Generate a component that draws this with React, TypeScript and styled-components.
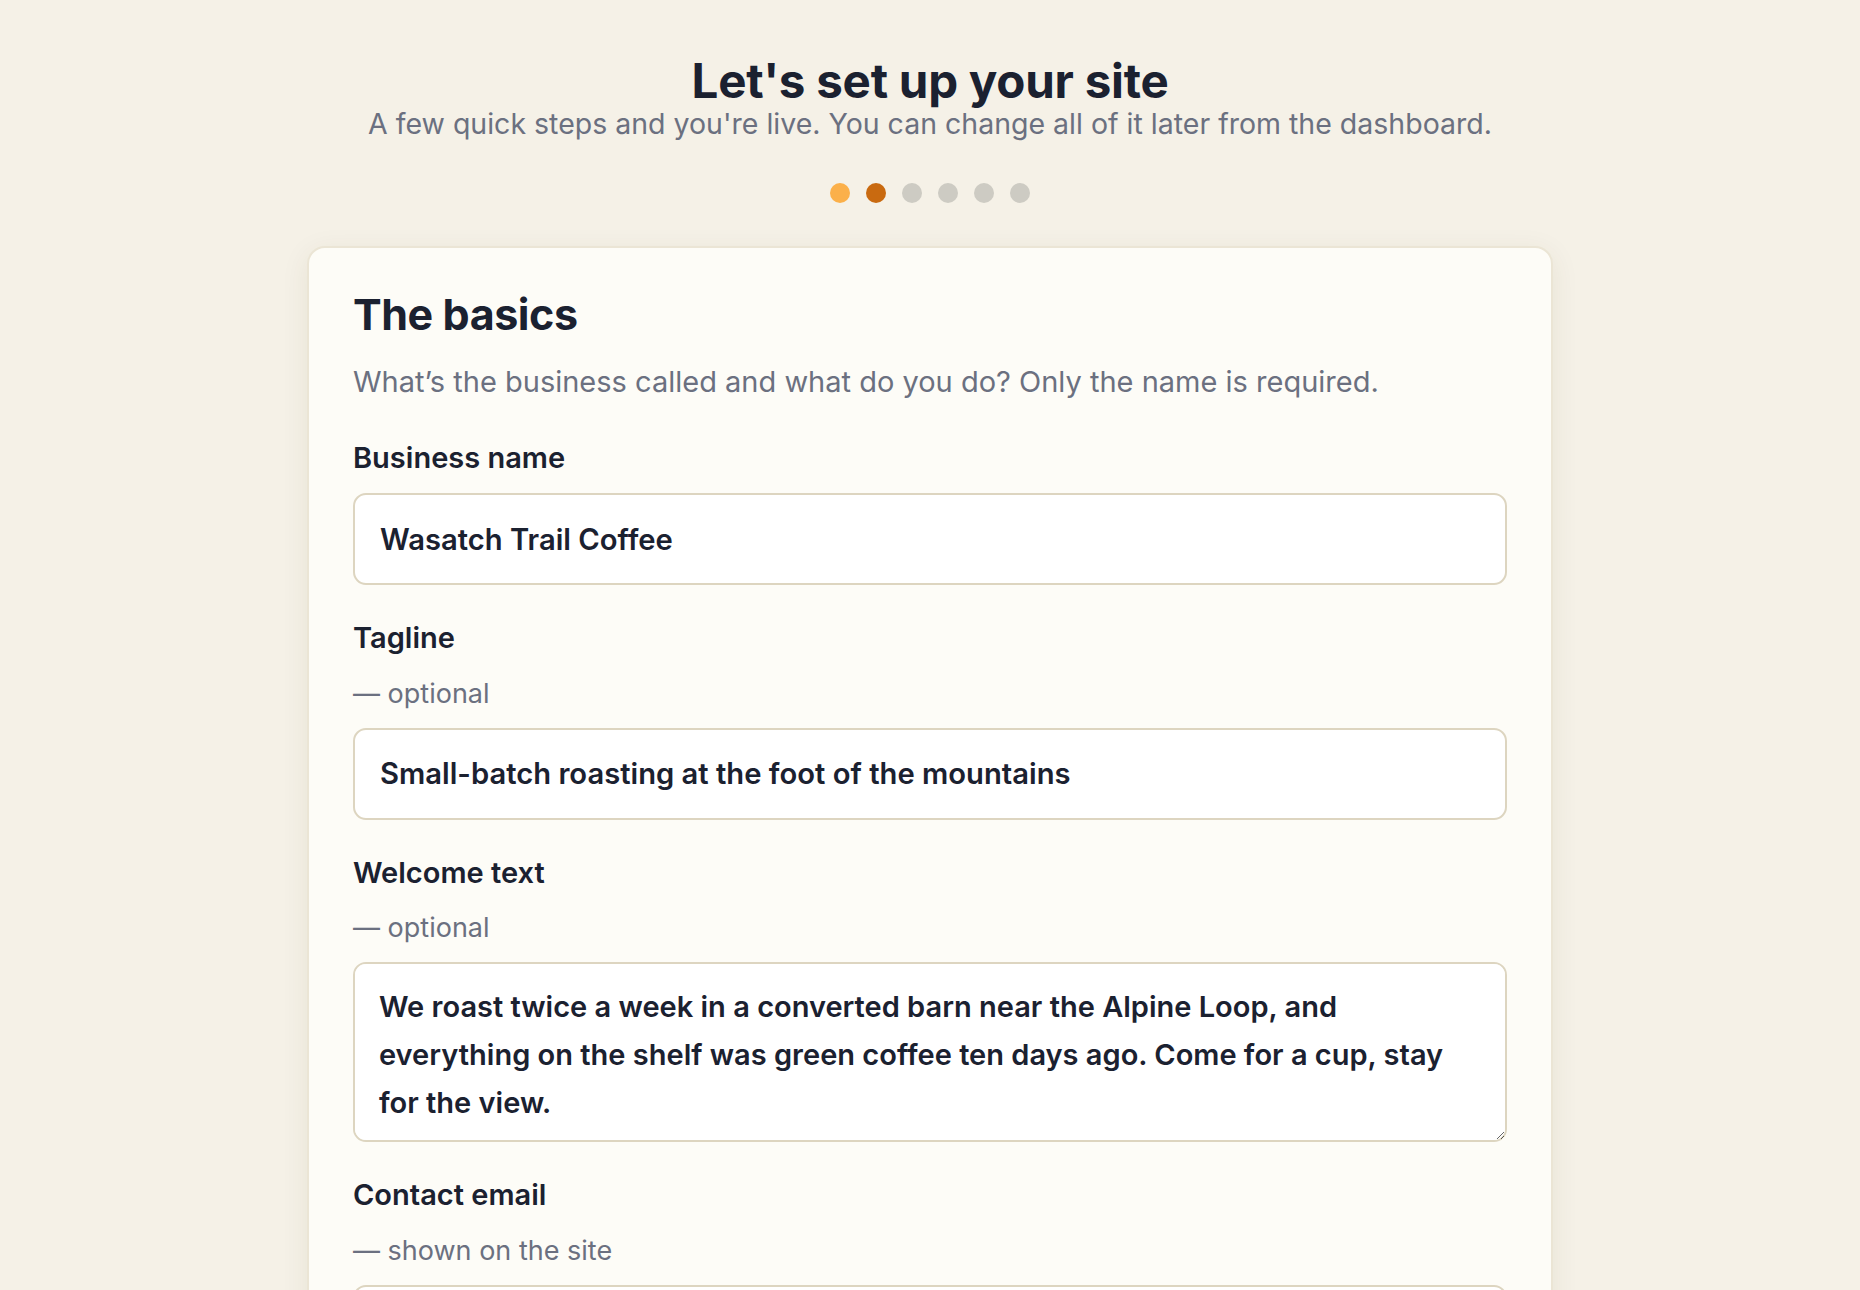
import styled, { createGlobalStyle } from "styled-components";

const GlobalStyle = createGlobalStyle`
  html, body {
    margin: 0;
    padding: 0;
    background: #f5f1e7;
  }
  body {
    font-family: Inter, "Noto Sans", sans-serif;
    color: #1b2130;
  }
  * {
    box-sizing: border-box;
  }
`;

const steps = [0, 1, 2, 3, 4, 5];
const current = 1;

export default function App() {
  return (
    <>
      <GlobalStyle />
      <PageStyle>
        <HeaderStyle>
          <TitleStyle>Let's set up your site</TitleStyle>
          <SubtitleStyle>
            A few quick steps and you're live. You can change all of it later
            from the dashboard.
          </SubtitleStyle>
        </HeaderStyle>
        <DotsStyle>
          {steps.map((s) => (
            <DotStyle
              key={s}
              $state={s < current ? "done" : s === current ? "active" : "todo"}
            />
          ))}
        </DotsStyle>
        <CardStyle>
          <CardTitleStyle>The basics</CardTitleStyle>
          <CardTextStyle>
            What’s the business called and what do you do? Only the name is
            required.
          </CardTextStyle>
          <FieldsStyle>
            <FieldStyle>
              <LabelStyle htmlFor="name">Business name</LabelStyle>
              <InputStyle id="name" defaultValue="Wasatch Trail Coffee" />
            </FieldStyle>
            <FieldStyle>
              <LabelStyle htmlFor="tagline">Tagline</LabelStyle>
              <HintStyle>— optional</HintStyle>
              <InputStyle
                id="tagline"
                defaultValue="Small-batch roasting at the foot of the mountains"
              />
            </FieldStyle>
            <FieldStyle>
              <LabelStyle htmlFor="welcome">Welcome text</LabelStyle>
              <HintStyle>— optional</HintStyle>
              <TextAreaStyle
                id="welcome"
                defaultValue="We roast twice a week in a converted barn near the Alpine Loop, and everything on the shelf was green coffee ten days ago. Come for a cup, stay for the view."
              />
            </FieldStyle>
            <FieldStyle>
              <LabelStyle htmlFor="email">Contact email</LabelStyle>
              <HintStyle>— shown on the site</HintStyle>
              <InputStyle
                id="email"
                type="email"
                defaultValue="hello@wasatchtrail.coffee"
              />
            </FieldStyle>
          </FieldsStyle>
        </CardStyle>
      </PageStyle>
    </>
  );
}

const PageStyle = styled.div`
  display: flex;
  flex-direction: column;
  align-items: center;
  padding: 55px 0 60px;
`;

const HeaderStyle = styled.div`
  display: flex;
  flex-direction: column;
  align-items: center;
  text-align: center;
`;

const TitleStyle = styled.h1`
  margin: 0;
  font-size: 47.5px;
  line-height: 1.1;
  font-weight: 700;
  letter-spacing: -0.005em;
  color: #1b2130;
`;

const SubtitleStyle = styled.p`
  margin: -1px 0 0;
  font-size: 28.5px;
  line-height: 1.25;
  font-weight: 400;
  color: #6b7080;
`;

const DotsStyle = styled.div`
  display: flex;
  gap: 16px;
  margin-top: 41px;
`;

const dotColors = {
  done: "#fbb04a",
  active: "#c96a10",
  todo: "#cdcbc3",
};

const DotStyle = styled.span<{ $state: "done" | "active" | "todo" }>`
  width: 20px;
  height: 20px;
  border-radius: 50%;
  background: ${(p) => dotColors[p.$state]};
`;

const CardStyle = styled.div`
  width: 1246px;
  margin-top: 43px;
  padding: 42px 44px 60px;
  background: #fdfcf7;
  border: 2px solid #ebe5d5;
  border-radius: 18px;
  box-shadow: 0 6px 28px rgba(80, 64, 20, 0.08);
`;

const CardTitleStyle = styled.h2`
  margin: 0;
  font-size: 43px;
  line-height: 1.15;
  font-weight: 700;
  letter-spacing: -0.01em;
  color: #1b2130;
`;

const CardTextStyle = styled.p`
  margin: 21px 0 0;
  font-size: 29px;
  line-height: 1.5;
  color: #6b7080;
`;

const FieldsStyle = styled.div`
  display: flex;
  flex-direction: column;
  gap: 33px;
  margin-top: 34px;
`;

const FieldStyle = styled.div`
  display: flex;
  flex-direction: column;
  gap: 15px;
`;

const LabelStyle = styled.label`
  font-size: 29px;
  line-height: 1.4;
  font-weight: 600;
  color: #1b2130;
`;

const HintStyle = styled.span`
  margin-top: 1px;
  font-size: 27px;
  line-height: 1.4;
  color: #6b7080;
`;

const InputStyle = styled.input`
  width: 100%;
  height: 92px;
  padding: 0 25px;
  font-family: inherit;
  font-size: 29.2px;
  font-weight: 600;
  color: #1b2130;
  background: #ffffff;
  border: 2px solid #ddd5c0;
  border-radius: 13px;
  outline: none;
`;

const TextAreaStyle = styled.textarea`
  display: block;
  width: 100%;
  height: 180px;
  padding: 19px 24px;
  font-family: inherit;
  font-size: 29px;
  line-height: 48px;
  font-weight: 600;
  color: #1b2130;
  background: #ffffff;
  border: 2px solid #ddd5c0;
  border-radius: 13px;
  outline: none;
  resize: vertical;
`;
